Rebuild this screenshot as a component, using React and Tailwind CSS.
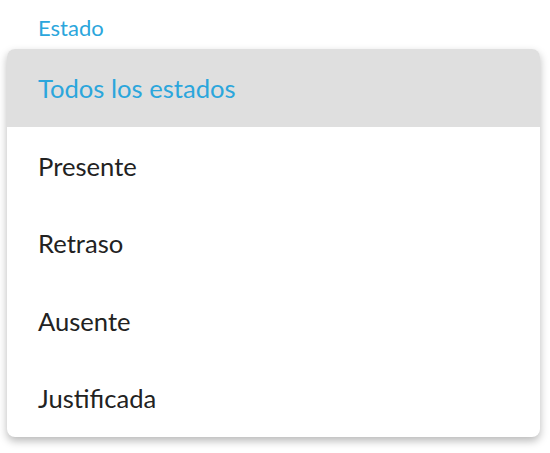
const options = ['Todos los estados', 'Presente', 'Retraso', 'Ausente', 'Justificada'];

export default function App() {
  return (
    <div className="w-[550px] h-[453px] bg-white font-['Lato',sans-serif] pt-[13px] px-[7px]">
      <div className="pl-[31px] text-[22px] leading-[30px] text-[#2ba6dc]">Estado</div>
      <ul className="mt-[6px] w-[533px] rounded-[8px] bg-white shadow-[0_4px_8px_rgba(0,0,0,0.28)] overflow-hidden">
        {options.map((opt, i) => (
          <li
            key={opt}
            className={
              i === 0
                ? 'h-[78px] flex items-center pl-[31px] bg-[#dfdfdf] text-[25.6px] text-[#2ba6dc]'
                : 'h-[77.5px] flex items-center pl-[31px] text-[25.6px] text-[#222222]'
            }
          >
            {opt}
          </li>
        ))}
      </ul>
    </div>
  );
}
